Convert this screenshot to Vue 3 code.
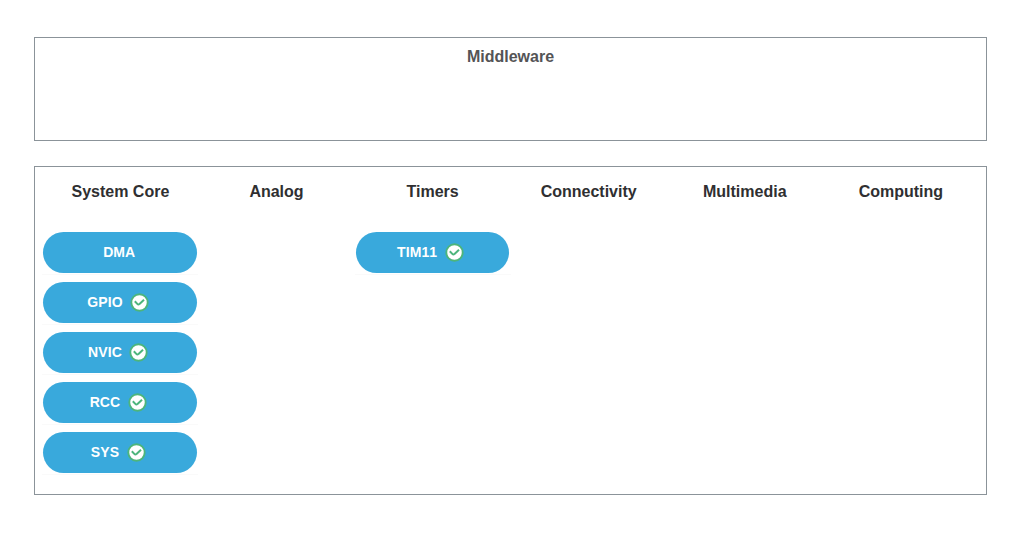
<script setup>
const columns = [
  { title: 'System Core', items: [
    { name: 'DMA', ok: false },
    { name: 'GPIO', ok: true },
    { name: 'NVIC', ok: true },
    { name: 'RCC', ok: true },
    { name: 'SYS', ok: true },
  ] },
  { title: 'Analog', items: [] },
  { title: 'Timers', items: [{ name: 'TIM11', ok: true }] },
  { title: 'Connectivity', items: [] },
  { title: 'Multimedia', items: [] },
  { title: 'Computing', items: [] },
]
</script>

<template>
  <main class="page">
    <section class="panel middleware"><h2>Middleware</h2></section>
    <section class="panel grid">
      <div v-for="col in columns" :key="col.title" class="column">
        <h3>{{ col.title }}</h3>
        <div v-for="item in col.items" :key="item.name" class="cell">
          <button class="pill" :class="{ checked: item.ok }">
            <span>{{ item.name }}</span>
            <svg v-if="item.ok" width="19" height="19" viewBox="0 0 19 19">
              <circle cx="9.5" cy="9.5" r="8.2" fill="#fff" stroke="#4db57c" stroke-width="1.9" />
              <path d="M4.8 8.3L7.3 10.9Q8.4 12 9.5 10.9L14 6.7" fill="none" stroke="#4db57c" stroke-width="2" />
            </svg>
          </button>
        </div>
      </div>
    </section>
  </main>
</template>

<style>
body { background: #fff; }
</style>

<style scoped>
.page {
  box-sizing: border-box;
  width: 1032px;
  height: 536px;
  padding: 37px 45px 41px 34px;
  display: flex;
  flex-direction: column;
  gap: 25px;
  font-family: "Liberation Sans", Arial, sans-serif;
}
.panel { box-sizing: border-box; border: 1px solid #8b9399; }
.middleware { height: 104px; padding-top: 9px; }
h2, h3 { margin: 0; font-size: 16px; line-height: 20px; font-weight: 700; text-align: center; }
h2 { color: #545456; }
h3 { color: #2f2f31; margin-bottom: 29px; }
.grid {
  height: 329px;
  padding: 15px 0 0 7.35px;
  display: grid;
  grid-template-columns: repeat(6, 156.1px);
}
.column { display: flex; flex-direction: column; align-items: center; }
.cell {
  box-sizing: border-box;
  width: 156px;
  height: 44px;
  margin-bottom: 6px;
  padding: 1.3px 1px 0;
  border-bottom: 1px solid #fafafa;
}
.pill {
  box-sizing: border-box;
  display: flex;
  align-items: center;
  justify-content: center;
  gap: 7.5px;
  width: 153.7px;
  height: 41px;
  padding: 0 2px 0 0;
  border: 0;
  border-radius: 21px;
  background: #39a9dc;
  color: #fff;
  font: 700 14px/20px "Liberation Sans", Arial, sans-serif;
  font-kerning: none;
  letter-spacing: 0.1px;
}
.checked { padding-right: 4px; }
.pill span { margin-top: -2px; }
.pill svg { margin-top: -1px; }
</style>
